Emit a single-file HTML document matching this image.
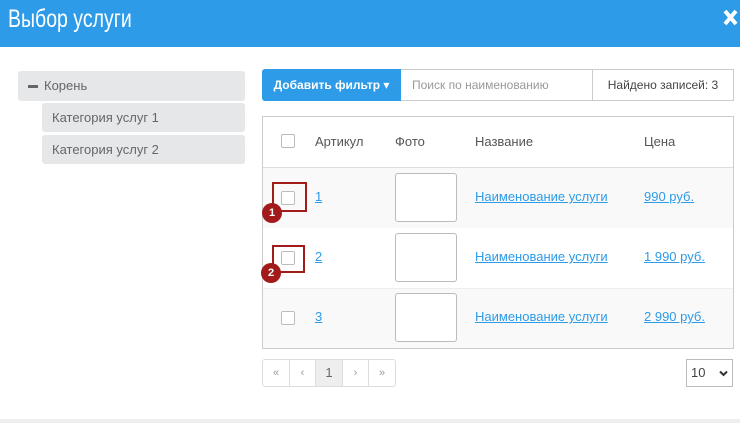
<!DOCTYPE html>
<html><head><meta charset="utf-8"><style>
*{box-sizing:border-box;margin:0;padding:0}
body{width:740px;height:423px;background:#fff;font-family:"Liberation Sans","DejaVu Sans",sans-serif;position:relative;overflow:hidden;color:#555}
.a{position:absolute}
.hdr{left:0;top:0;width:740px;height:47px;background:#2d9be8;color:#fff}
.t{font-size:25px;left:8px;top:5px;transform:scaleX(0.78);transform-origin:0 0;white-space:nowrap}
.tree{background:#e6e7e8;border-radius:3px;font-size:13px;color:#666;padding-left:10px;line-height:30px}
.cb{width:14px;height:14px;border:1px solid #bbb;border-radius:2px;background:#fff}
a{color:#2d9be8;text-decoration:underline;font-size:13px}
.ph{width:62px;height:49px;border:1px solid #bbb;border-radius:3px;background:#fff}
.red{border:2px solid #a31a1a}
.bd{width:20px;height:20px;border-radius:50%;background:#a31a1a;color:#fff;font-size:11px;font-weight:bold;text-align:center;line-height:20px}
.pg{top:359px;height:28px;border:1px solid #ddd;font-size:11px;color:#999;text-align:center;line-height:26px}
</style></head><body>
<div class="a hdr"><div class="a t">Выбор услуги</div>
<svg class="a" style="left:723px;top:9px" width="15" height="17" viewBox="0 0 15 17"><path d="M2 2L13 15M13 2L2 15" stroke="#fff" stroke-width="4"/></svg></div>
<div class="a tree" style="left:18px;top:71px;width:227px;height:30px"><span style="display:inline-block;width:10px;height:3px;background:#666;vertical-align:middle;margin-right:6px"></span>Корень</div>
<div class="a tree" style="left:42px;top:103px;width:203px;height:29px;line-height:29px">Категория услуг 1</div>
<div class="a tree" style="left:42px;top:135px;width:203px;height:29px;line-height:29px">Категория услуг 2</div>
<div class="a" style="left:262px;top:69px;width:139px;height:32px;background:#2d9be8;color:#fff;font-size:12px;font-weight:bold;line-height:32px;text-align:center;border-radius:3px 0 0 3px">Добавить фильтр ▾</div>
<div class="a" style="left:401px;top:69px;width:192px;height:32px;border:1px solid #ccc;border-left:0;font-size:12px;color:#999;line-height:30px;padding-left:11px">Поиск по наименованию</div>
<div class="a" style="left:592px;top:69px;width:142px;height:32px;border:1px solid #ccc;font-size:12px;color:#444;line-height:30px;text-align:center">Найдено записей: 3</div>
<div class="a" style="left:262px;top:116px;width:472px;height:233px;border:1px solid #ccc"></div>
<div class="a" style="left:263px;top:167px;width:470px;height:1px;background:#ddd"></div>
<div class="a" style="left:263px;top:168px;width:470px;height:60px;background:#f9f9f9"></div>
<div class="a" style="left:263px;top:288px;width:470px;height:60px;background:#f9f9f9;border-top:1px solid #eee"></div>
<div class="a cb" style="left:281px;top:134px"></div>
<div class="a" style="top:134px;left:315px;font-size:13px;color:#555">Артикул</div>
<div class="a" style="top:134px;left:395px;font-size:13px;color:#555">Фото</div>
<div class="a" style="top:134px;left:475px;font-size:13px;color:#555">Название</div>
<div class="a" style="top:134px;left:644px;font-size:13px;color:#555">Цена</div>
<div class="a cb" style="left:281px;top:191px"></div><a class="a" style="left:315px;top:189px">1</a><div class="a ph" style="left:395px;top:173px"></div><a class="a" style="left:475px;top:189px">Наименование услуги</a><a class="a" style="left:644px;top:189px">990 руб.</a>
<div class="a cb" style="left:281px;top:251px"></div><a class="a" style="left:315px;top:249px">2</a><div class="a ph" style="left:395px;top:233px"></div><a class="a" style="left:475px;top:249px">Наименование услуги</a><a class="a" style="left:644px;top:249px">1 990 руб.</a>
<div class="a cb" style="left:281px;top:311px"></div><a class="a" style="left:315px;top:309px">3</a><div class="a ph" style="left:395px;top:293px"></div><a class="a" style="left:475px;top:309px">Наименование услуги</a><a class="a" style="left:644px;top:309px">2 990 руб.</a>
<div class="a red" style="left:272px;top:182px;width:35px;height:30px"></div>
<div class="a bd" style="left:262px;top:203px">1</div>
<div class="a red" style="left:272px;top:245px;width:33px;height:28px"></div>
<div class="a bd" style="left:261px;top:263px">2</div>
<div class="a pg" style="left:262px;width:28px;border-radius:3px 0 0 3px">«</div>
<div class="a pg" style="left:289px;width:27px">‹</div>
<div class="a pg" style="left:315px;width:28px;background:#eee;color:#666;font-size:13px">1</div>
<div class="a pg" style="left:342px;width:27px">›</div>
<div class="a pg" style="left:368px;width:28px;border-radius:0 3px 3px 0">»</div>
<div class="a" style="left:686px;top:359px;width:47px;height:28px;border:1px solid #bbb;font-size:13px;color:#444;line-height:26px;padding-left:4px">10
<svg class="a" style="right:4px;top:10px" width="9" height="7" viewBox="0 0 9 7"><path d="M1 1.5L4.5 5L8 1.5" stroke="#333" stroke-width="2" fill="none"/></svg></div>
<div class="a" style="left:0;top:419px;width:740px;height:4px;background:#eee"></div>
</body></html>
